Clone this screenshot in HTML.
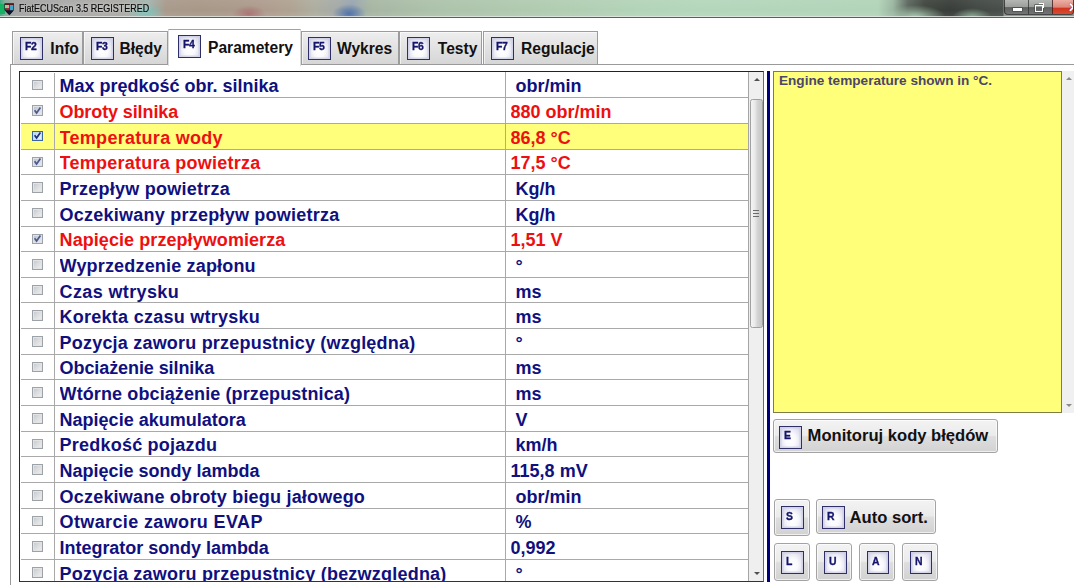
<!DOCTYPE html>
<html lang="pl"><head><meta charset="utf-8"><title>FiatECUScan 3.5 REGISTERED</title>
<style>
html,body{margin:0;padding:0;background:#fff;}
body{width:1074px;height:585px;overflow:hidden;position:relative;font-family:"Liberation Sans",sans-serif;}
#win{position:absolute;left:0;top:0;width:1074px;height:585px;overflow:hidden;background:#fff;}
#tbar{position:absolute;left:0;top:0;width:1074px;height:16.5px;overflow:hidden;
 background:linear-gradient(90deg,#35a47e 0px,#84a896 5px,#a4a4a4 15px,#a8a8a7 70px,#aba8a4 120px,#a2b4ae 148px,#a89a8c 166px,#a89888 200px,#ab9a8b 236px,#ae9c8e 262px,#b0a292 290px,#adae9f 315px,#a4aaa8 338px,#98a4b0 352px,#a6b6a2 370px,#adc2aa 430px,#b1cdb2 560px,#b3d4b8 640px,#b4d7bb 700px,#b2d4b8 878px,#9ab5a0 893px,#5b665e 908px,#40463f 925px,#383d39 950px,#424843 978px,#484e49 1003px,#8a938c 1004px,#8a938c 1074px);}
#tbar:after{content:"";position:absolute;left:0;top:0;width:100%;height:100%;background:linear-gradient(180deg,rgba(255,255,255,.06),rgba(255,255,255,0) 60%,rgba(255,255,255,.08));}
.blob{position:absolute;}
#tcl{position:absolute;left:0;top:0;width:1074px;height:17px;overflow:hidden;}
#tl1{position:absolute;left:0;top:15.6px;width:1074px;height:1.1px;background:rgba(228,232,229,.8);}
#tl2{position:absolute;left:0;top:16.7px;width:1074px;height:1.5px;background:#5a5f5d;}
#ttl{position:absolute;left:19.2px;top:3.3px;font-size:10.3px;line-height:12px;color:#080808;-webkit-text-stroke:.2px #111;white-space:nowrap;transform:scaleX(.872);transform-origin:0 0;text-shadow:0 0 3px rgba(255,255,255,.55);}
.tab{position:absolute;top:31.2px;height:33.3px;box-sizing:border-box;border:1px solid #9c9c9c;border-bottom:none;border-left-width:1px;background:linear-gradient(180deg,#eeeeee 0%,#e3e3e3 45%,#d6d6d6 100%);box-shadow:inset 1px 1px 0 rgba(255,255,255,.6);}
.tab.tsel{top:29px;height:37px;background:#fff;border-color:#a2a2a2 #dcdcdc #fff #dcdcdc;z-index:3;box-shadow:none;}
.tlab{position:absolute;font-weight:bold;font-size:15.6px;line-height:18px;color:#111;white-space:nowrap;z-index:4;}
.key{position:absolute;box-sizing:border-box;border:1.4px solid #2e2e68;box-shadow:inset 0 0 0 1.6px rgba(206,206,228,.75);background:radial-gradient(ellipse at 50% 62%,#ffffff 0%,#fafafd 35%,#dcdcec 78%,#cbcbe2 100%);color:#15156c;font-weight:bold;text-align:left;line-height:1;z-index:4;font-family:"Liberation Sans",sans-serif;padding:2.4px 0 0 4px;letter-spacing:-.45px;-webkit-text-stroke:.35px #15156c;white-space:nowrap;overflow:hidden;}
.key b{display:inline-block;transform:scaleX(.9);transform-origin:0 50%;}
#panelTop{position:absolute;left:10.5px;top:64px;width:1064px;height:1px;background:#9a9a9a;z-index:2;}
#panelLeft{position:absolute;left:10px;top:64px;width:1px;height:521px;background:#9a9a9a;}
#list{position:absolute;left:19.1px;top:70.9px;width:745px;height:511.2px;box-sizing:border-box;border-style:solid;border-color:#222 #6a6a6a #333 #2a2a2a;border-width:1.5px 1px 1.4px 1.3px;background:transparent;z-index:6;pointer-events:none;}
.row{position:absolute;left:.4px;width:728px;height:25.66px;box-sizing:border-box;border-bottom:1.3px solid #a9a9a9;font-weight:bold;font-size:18px;color:#10107e;white-space:nowrap;z-index:1;}
.row.red{color:#ee1010;}
.row.sel{background:#ffff7c;}
.row>div{position:absolute;top:0;height:100%;line-height:25.5px;overflow:hidden;padding-top:1.7px;box-sizing:border-box;}
.c0{left:0;width:34.6px;border-right:1.2px solid #a9a9a9;padding-top:0 !important;}
.c1{left:38.8px;width:445px;}
.c2{left:489.8px;width:238px;}
.c2:before{content:"";}
#rows{position:absolute;left:20.4px;top:72px;width:728px;height:508.8px;overflow:hidden;}
#vline2{position:absolute;left:484.5px;top:0px;width:1.2px;height:509px;background:#a9a9a9;z-index:2;}
.cb{position:absolute;left:11.6px;top:7.0px;width:10.6px;height:10.6px;box-sizing:border-box;border:1px solid #9da1a8;background:linear-gradient(135deg,#c4c6c9 0%,#dcdddf 50%,#f0f0f0 100%);box-shadow:inset 0 0 0 1px #e2e3e5;}
.cb.on{background:linear-gradient(135deg,#b9bdcc 0%,#d6d9e6 55%,#ececf4 100%);}
.cb.hot{border-color:#3a66a0;background:linear-gradient(135deg,#a9cdf0 0%,#d6e9fa 55%,#eff7ff 100%);box-shadow:inset 0 0 0 1px #c4ddf4;}
.cb svg{position:absolute;left:-1px;top:-1.4px;}
#sb{position:absolute;left:748.1px;top:72px;width:15.2px;height:509px;background:#efefef;z-index:3;border-left:1px solid #a5a5a5;box-sizing:border-box;}
#thumb{position:absolute;left:749.6px;top:98.8px;width:13.2px;height:229.6px;box-sizing:border-box;border:1px solid #a0a0a0;border-radius:2.5px;background:linear-gradient(90deg,#f4f4f4 0%,#e9e9e9 35%,#d3d3d3 60%,#c6c6c6 100%);z-index:4;}
.arr{position:absolute;width:0;height:0;border-left:3px solid transparent;border-right:3px solid transparent;z-index:5;}
.arr.up{border-bottom:3.5px solid #505050;}
.arr.dn{border-top:3.5px solid #505050;}
.grip{position:absolute;left:753.2px;width:5.6px;height:1.3px;background:#6c6c6c;z-index:5;}
#navy{position:absolute;left:766.9px;top:71px;width:3.3px;height:510.6px;background:#00007c;}
#note{position:absolute;left:772.9px;top:71px;width:288.8px;height:342px;box-sizing:border-box;border:1px solid #7d7d45;background:#ffff7a;}
#noteTxt{position:absolute;left:779px;top:73.2px;font-weight:bold;font-size:13.6px;line-height:16px;color:#4b4669;white-space:nowrap;}
#sb2{position:absolute;left:1062px;top:70.6px;width:12px;height:342.4px;background:#f0f0f0;}
.btn{position:absolute;box-sizing:border-box;border:1px solid #a3a3a3;border-radius:3px;background:linear-gradient(180deg,#f3f3f3 0%,#ebebeb 48%,#dedede 52%,#d2d2d2 100%);box-shadow:inset 0 0 0 1px rgba(255,255,255,.65);}
.blab{position:absolute;font-weight:bold;font-size:16.6px;line-height:19px;color:#111;white-space:nowrap;z-index:4;}
#botline{position:absolute;left:0;top:581px;width:764px;height:1.3px;background:#3a3a3a;}
</style></head><body>
<div id="win">
<div id="tbar"><div class="blob" style="left:128px;top:4px;width:36px;height:16px;background:radial-gradient(ellipse,rgba(112,196,186,.8),rgba(112,196,186,0) 70%)"></div>
<div class="blob" style="left:232px;top:5px;width:34px;height:18px;background:radial-gradient(ellipse,rgba(168,96,104,.75),rgba(168,96,104,0) 70%)"></div>
<div class="blob" style="left:332px;top:4px;width:34px;height:20px;background:radial-gradient(ellipse,rgba(60,100,165,.85),rgba(60,100,165,0) 70%)"></div>
<div class="blob" style="left:18px;top:1px;width:134px;height:14px;background:radial-gradient(ellipse,rgba(255,255,255,.16),rgba(255,255,255,0) 75%)"></div><div class="blob" style="left:884px;top:5px;width:62px;height:24px;background:radial-gradient(ellipse,rgba(168,204,176,.95),rgba(168,204,176,0) 70%)"></div><div class="blob" style="left:952px;top:8px;width:40px;height:18px;background:radial-gradient(ellipse,rgba(150,186,158,.85),rgba(150,186,158,0) 70%)"></div></div><div id="tl1"></div><div id="tl2"></div>
<svg style="position:absolute;left:0;top:0" width="20" height="17" viewBox="0 0 20 17">
 <defs><filter id="bl" x="-50%" y="-50%" width="200%" height="200%"><feGaussianBlur stdDeviation="0.6"/></filter></defs>
 <g filter="url(#bl)">
 <rect x="-2" y="4" width="7" height="10" fill="#17b264"/>
 <path d="M4.4 3.4 H14 V10 L9.4 15.2 L4.4 10 Z" fill="#2a1530"/>
 <rect x="4.8" y="3.2" width="9" height="1.6" fill="#6a1b22"/>
 <rect x="5" y="5" width="2.2" height="3.4" fill="#7fe08a"/>
 <rect x="7" y="5" width="2.2" height="3.4" fill="#f09aa8"/>
 <rect x="9.8" y="5" width="3.6" height="5.4" fill="#3aa6c8"/>
 <rect x="5.4" y="8.4" width="4" height="2" fill="#b02030"/>
 <path d="M5 10.6 H13.6 L9.4 15 Z" fill="#10122e"/>
 </g>
</svg>
<div id="ttl">FiatECUScan 3.5 REGISTERED</div>
<!-- caption buttons -->
<div style="position:absolute;left:1004px;top:0;width:70px;height:15px;border-radius:0 0 4px 4px;border:1px solid rgba(40,44,42,.8);border-top:none;box-sizing:border-box;background:linear-gradient(180deg,#b4b6b4 0%,#9c9e9c 50%,#5e615f 54%,#727573 100%);overflow:hidden;">
 <div style="position:absolute;left:23px;top:0;width:1px;height:15px;background:rgba(40,44,42,.7)"></div>
 <div style="position:absolute;left:47px;top:0;width:23px;height:15px;background:linear-gradient(180deg,#eab0a6 0%,#de8678 48%,#d03420 54%,#dc5030 100%);border-left:1px solid rgba(60,30,30,.8)"></div>
 <div style="position:absolute;left:8px;top:8px;width:9px;height:2.6px;background:#fff;box-shadow:0 0 0 .6px #444"></div>
 <div style="position:absolute;left:30px;top:5px;width:6px;height:5px;border:1.6px solid #fff;box-shadow:0 0 0 .6px #444"></div>
 <div style="position:absolute;left:34px;top:2.6px;width:4px;height:4px;border-top:1.4px solid #fff;border-right:1.4px solid #fff"></div>
 <div style="position:absolute;left:63px;top:0px;color:#fff;font-weight:bold;font-size:13px;line-height:15px;text-shadow:0 0 1px #400">&#10005;</div>
</div>

<!-- tabs -->
<div class="tab" style="left:12.3px;width:70.7px"></div>
<span class="key" style="left:20.4px;top:37.0px;width:22.7px;height:22.7px;font-size:11.6px"><b>F2</b></span>
<span class="tlab" style="left:50.3px;top:39.6px">Info</span>
<div class="tab" style="left:83.0px;width:85.4px"></div>
<span class="key" style="left:91.0px;top:37.0px;width:22.7px;height:22.7px;font-size:11.6px"><b>F3</b></span>
<span class="tlab" style="left:119.5px;top:39.6px">Błędy</span>
<div class="tab tsel" style="left:168.4px;width:132.2px"></div>
<span class="key" style="left:178.0px;top:35.0px;width:22.7px;height:22.7px;font-size:11.6px"><b>F4</b></span>
<span class="tlab" style="left:208.0px;top:38.6px">Parametery</span>
<div class="tab" style="left:300.6px;width:98.1px"></div>
<span class="key" style="left:308.0px;top:37.0px;width:22.7px;height:22.7px;font-size:11.6px"><b>F5</b></span>
<span class="tlab" style="left:337.0px;top:39.6px">Wykres</span>
<div class="tab" style="left:398.7px;width:83.8px"></div>
<span class="key" style="left:407.0px;top:37.0px;width:22.7px;height:22.7px;font-size:11.6px"><b>F6</b></span>
<span class="tlab" style="left:437.8px;top:39.6px">Testy</span>
<div class="tab" style="left:482.5px;width:115.0px"></div>
<span class="key" style="left:491.4px;top:37.0px;width:22.7px;height:22.7px;font-size:11.6px"><b>F7</b></span>
<span class="tlab" style="left:521.0px;top:39.6px">Regulacje</span>
<div id="panelTop"></div><div id="panelLeft"></div>
<div style="position:absolute;left:169.4px;top:63px;width:130.2px;height:3px;background:#fff;z-index:3"></div>

<!-- list -->
<div id="list"></div>
<div id="rows">
<div class="row" style="top:0.55px"><div class="c0"><span class="cb"></span></div><div class="c1" style="letter-spacing:-0.008px">Max prędkość obr. silnika</div><div class="c2">&nbsp;obr/min</div></div>
<div class="row red" style="top:26.21px"><div class="c0"><span class="cb on"><svg viewBox="0 0 11 11" width="11" height="11"><path d="M2.6 5.2 L4.6 8 L8.4 2.6" fill="none" stroke="#4a5a8c" stroke-width="1.7"/></svg></span></div><div class="c1" style="letter-spacing:-0.108px">Obroty silnika</div><div class="c2">880&nbsp;obr/min</div></div>
<div class="row sel red" style="top:51.87px"><div class="c0"><span class="cb on hot"><svg viewBox="0 0 11 11" width="11" height="11"><path d="M2.6 5.2 L4.6 8 L8.4 2.6" fill="none" stroke="#1c2f7a" stroke-width="1.7"/></svg></span></div><div class="c1" style="letter-spacing:0.287px">Temperatura wody</div><div class="c2">86,8&nbsp;°C</div></div>
<div class="row red" style="top:77.53px"><div class="c0"><span class="cb on"><svg viewBox="0 0 11 11" width="11" height="11"><path d="M2.6 5.2 L4.6 8 L8.4 2.6" fill="none" stroke="#4a5a8c" stroke-width="1.7"/></svg></span></div><div class="c1" style="letter-spacing:0.250px">Temperatura powietrza</div><div class="c2">17,5&nbsp;°C</div></div>
<div class="row" style="top:103.19px"><div class="c0"><span class="cb"></span></div><div class="c1" style="letter-spacing:0.241px">Przepływ powietrza</div><div class="c2">&nbsp;Kg/h</div></div>
<div class="row" style="top:128.85px"><div class="c0"><span class="cb"></span></div><div class="c1" style="letter-spacing:0.236px">Oczekiwany przepływ powietrza</div><div class="c2">&nbsp;Kg/h</div></div>
<div class="row red" style="top:154.51px"><div class="c0"><span class="cb on"><svg viewBox="0 0 11 11" width="11" height="11"><path d="M2.6 5.2 L4.6 8 L8.4 2.6" fill="none" stroke="#4a5a8c" stroke-width="1.7"/></svg></span></div><div class="c1" style="letter-spacing:0.070px">Napięcie przepływomierza</div><div class="c2">1,51&nbsp;V</div></div>
<div class="row" style="top:180.17px"><div class="c0"><span class="cb"></span></div><div class="c1" style="letter-spacing:0.174px">Wyprzedzenie zapłonu</div><div class="c2">&nbsp;°</div></div>
<div class="row" style="top:205.83px"><div class="c0"><span class="cb"></span></div><div class="c1" style="letter-spacing:0.364px">Czas wtrysku</div><div class="c2">&nbsp;ms</div></div>
<div class="row" style="top:231.49px"><div class="c0"><span class="cb"></span></div><div class="c1" style="letter-spacing:0.255px">Korekta czasu wtrysku</div><div class="c2">&nbsp;ms</div></div>
<div class="row" style="top:257.15px"><div class="c0"><span class="cb"></span></div><div class="c1" style="letter-spacing:0.203px">Pozycja zaworu przepustnicy (względna)</div><div class="c2">&nbsp;°</div></div>
<div class="row" style="top:282.81px"><div class="c0"><span class="cb"></span></div><div class="c1" style="letter-spacing:-0.088px">Obciażenie silnika</div><div class="c2">&nbsp;ms</div></div>
<div class="row" style="top:308.47px"><div class="c0"><span class="cb"></span></div><div class="c1" style="letter-spacing:0.106px">Wtórne obciążenie (przepustnica)</div><div class="c2">&nbsp;ms</div></div>
<div class="row" style="top:334.13px"><div class="c0"><span class="cb"></span></div><div class="c1" style="letter-spacing:0.005px">Napięcie akumulatora</div><div class="c2">&nbsp;V</div></div>
<div class="row" style="top:359.79px"><div class="c0"><span class="cb"></span></div><div class="c1" style="letter-spacing:0.220px">Predkość pojazdu</div><div class="c2">&nbsp;km/h</div></div>
<div class="row" style="top:385.45px"><div class="c0"><span class="cb"></span></div><div class="c1" style="letter-spacing:-0.005px">Napięcie sondy lambda</div><div class="c2">115,8&nbsp;mV</div></div>
<div class="row" style="top:411.11px"><div class="c0"><span class="cb"></span></div><div class="c1" style="letter-spacing:0.200px">Oczekiwane obroty biegu jałowego</div><div class="c2">&nbsp;obr/min</div></div>
<div class="row" style="top:436.77px"><div class="c0"><span class="cb"></span></div><div class="c1" style="letter-spacing:0.374px">Otwarcie zaworu EVAP</div><div class="c2">&nbsp;%</div></div>
<div class="row" style="top:462.43px"><div class="c0"><span class="cb"></span></div><div class="c1" style="letter-spacing:-0.036px">Integrator sondy lambda</div><div class="c2">0,992</div></div>
<div class="row" style="top:488.09px"><div class="c0"><span class="cb"></span></div><div class="c1" style="letter-spacing:0.217px">Pozycja zaworu przepustnicy (bezwzględna)</div><div class="c2">&nbsp;°</div></div>
<div id="vline2"></div>
</div>
<div id="sb"></div><div id="thumb"></div>
<div class="arr up" style="left:753.8px;top:77.6px"></div>
<div class="arr dn" style="left:753.8px;top:571.8px"></div>
<div class="grip" style="top:210px"></div><div class="grip" style="top:212.8px"></div><div class="grip" style="top:215.6px"></div>


<div id="navy"></div>
<div id="note"></div><div id="noteTxt">Engine temperature shown in °C.</div>
<div id="sb2"></div>
<div class="arr up" style="left:1066.4px;top:77.4px;border-bottom-color:#8a8a8a"></div>
<div class="arr dn" style="left:1066.4px;top:404.2px;border-top-color:#8a8a8a"></div>

<!-- buttons -->
<div class="btn" style="left:773.4px;top:419.2px;width:224.6px;height:33.8px"></div>
<span class="key" style="left:779.4px;top:426.1px;width:22.7px;height:22.7px;font-size:11.6px"><b>E</b></span><span class="blab" style="left:807.6px;top:426.4px">Monitoruj kody błędów</span>
<div class="btn" style="left:773.7px;top:498.7px;width:36px;height:37px"></div><span class="key" style="left:781.1px;top:506.3px;width:22.7px;height:22.7px;font-size:11.6px"><b>S</b></span>
<div class="btn" style="left:816.4px;top:499.2px;width:119.6px;height:34.5px"></div><span class="key" style="left:822.1px;top:506.4px;width:22.7px;height:22.7px;font-size:11.6px"><b>R</b></span>
<span class="blab" style="left:849.6px;top:508.2px">Auto sort.</span>
<div class="btn" style="left:773.7px;top:543.3px;width:36px;height:37.3px"></div><span class="key" style="left:781.1px;top:551.2px;width:22.7px;height:22.7px;font-size:11.6px"><b>L</b></span>
<div class="btn" style="left:816.4px;top:543.3px;width:36.1px;height:37.3px"></div><span class="key" style="left:824.0px;top:551.2px;width:22.7px;height:22.7px;font-size:11.6px"><b>U</b></span>
<div class="btn" style="left:859.1px;top:543.3px;width:35.9px;height:37.3px"></div><span class="key" style="left:866.6px;top:551.2px;width:22.7px;height:22.7px;font-size:11.6px"><b>A</b></span>
<div class="btn" style="left:902.1px;top:543.3px;width:35.6px;height:37.3px"></div><span class="key" style="left:909.5px;top:551.2px;width:22.7px;height:22.7px;font-size:11.6px"><b>N</b></span>
</div>
</body></html>
